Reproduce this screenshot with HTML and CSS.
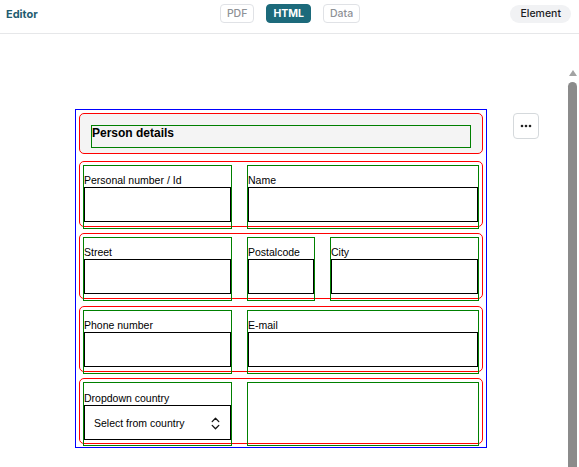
FILE: index.html
```html
<!DOCTYPE html>
<html lang="en">
<head>
<meta charset="utf-8">
<title>Editor</title>
<link rel="stylesheet" href="styles.css">
</head>
<body>
<header class="topbar">
  <div class="brand">Editor</div>
  <nav class="tabs">
    <button class="tab">PDF</button>
    <button class="tab tab-active">HTML</button>
    <button class="tab">Data</button>
  </nav>
  <div class="topbar-end"><span class="pill">Element</span></div>
</header>

<main class="canvas">
  <div class="workspace">
    <form class="frame">
      <section class="block block-title">
        <h2 class="title">Person details</h2>
      </section>

      <section class="block row-2">
        <div class="field"><label class="label">Personal number / Id</label><input class="input" type="text"></div>
        <div class="field"><label class="label">Name</label><input class="input" type="text"></div>
      </section>

      <section class="block row-3">
        <div class="field"><label class="label">Street</label><input class="input" type="text"></div>
        <div class="field"><label class="label">Postalcode</label><input class="input" type="text"></div>
        <div class="field"><label class="label">City</label><input class="input" type="text"></div>
      </section>

      <section class="block row-2">
        <div class="field"><label class="label">Phone number</label><input class="input" type="text"></div>
        <div class="field"><label class="label">E-mail</label><input class="input" type="text"></div>
      </section>

      <section class="block row-2">
        <div class="field">
          <label class="label label-select">Dropdown country</label>
          <div class="select">
            <span>Select from country</span>
            <svg class="chevrons" width="9" height="13" viewBox="0 0 9 13" aria-hidden="true">
              <path d="M1.2 4.6 L4.5 1.3 L7.8 4.6 M1.2 8.4 L4.5 11.7 L7.8 8.4" fill="none" stroke="#111" stroke-width="1.3" stroke-linecap="round" stroke-linejoin="round"/>
            </svg>
          </div>
        </div>
        <div class="field"></div>
      </section>
    </form>

    <button class="more" type="button" aria-label="More">
      <svg width="12" height="4" viewBox="0 0 12 4" aria-hidden="true">
        <circle cx="2" cy="2" r="1.3" fill="#222"/>
        <circle cx="6" cy="2" r="1.3" fill="#222"/>
        <circle cx="10" cy="2" r="1.3" fill="#222"/>
      </svg>
    </button>
  </div>

  <div class="scrollbar">
    <div class="scroll-arrow"></div>
    <div class="scroll-thumb"></div>
  </div>
</main>
</body>
</html>
```

FILE: styles.css
```css
* { box-sizing: border-box; }

html, body {
  margin: 0;
  height: 100%;
  background: #fff;
  overflow: hidden;
}

body {
  font-family: Inter, "Liberation Sans", sans-serif;
  color: #222;
}

/* top bar */
.topbar {
  display: grid;
  grid-template-columns: 1fr auto 1fr;
  align-items: center;
  height: 34px;
  padding: 0 8px 6px 6px;
  border-bottom: 1px solid #e6e7e9;
}

.brand {
  font-size: 11px;
  font-weight: 700;
  color: #1f5c70;
}

.tabs {
  display: flex;
  gap: 12px;
  margin-left: 3px;
}

.tab {
  height: 19px;
  padding: 0 6px;
  border: 1px solid #e0e2e6;
  border-radius: 4px;
  background: #fff;
  font-family: Inter, "Liberation Sans", sans-serif;
  font-size: 10.5px;
  font-weight: 500;
  color: #8e9196;
  line-height: 17px;
}

.tab-active {
  background: #1c6a7b;
  border-color: #1c6a7b;
  color: #fff;
  font-weight: 700;
  padding: 0 6px;
}

.topbar-end {
  display: flex;
  justify-content: flex-end;
}

.pill {
  height: 18px;
  padding: 0 10px;
  border-radius: 9px;
  background: #f1f2f4;
  font-size: 10.5px;
  font-weight: 500;
  line-height: 18px;
  color: #1d1d1f;
}

/* canvas */
.canvas {
  position: relative;
  height: calc(100% - 34px);
  padding: 75px 0 0 75px;
}

.workspace {
  display: flex;
  align-items: flex-start;
  gap: 26px;
}

.frame {
  width: 412px;
  margin: 0;
  padding: 3px;
  border: 1px solid #0000ff;
  display: flex;
  flex-direction: column;
  gap: 6.5px;
  font-family: "Liberation Sans", Arial, sans-serif;
}

.block {
  height: 66px;
  padding: 3px;
  border: 1px solid #ff0000;
  border-radius: 5px;
  display: grid;
  gap: 15px;
  align-items: start;
}

.row-2 { grid-template-columns: 149px 232px; }
.row-3 { grid-template-columns: 149px 68px 149px; }

.block-title {
  height: 41px;
  padding: 11px 11px 0;
  background: #f4f4f4;
  display: block;
}

.title {
  margin: 0;
  height: 23px;
  border: 1px solid #008000;
  font-size: 12px;
  font-weight: 700;
  line-height: 15px;
  color: #000;
}

.field {
  height: 64px;
  border: 1px solid #008000;
  display: flex;
  flex-direction: column;
}

.label {
  margin-top: 7px;
  font-size: 10.5px;
  line-height: 14px;
  color: #000;
}

.label-select { margin-top: 8px; }

.input {
  width: 100%;
  height: 35px;
  margin: 0;
  border: 1px solid #000;
  border-radius: 0;
  background: #fff;
  font: inherit;
}

.select {
  height: 35px;
  border: 1px solid #000;
  display: flex;
  align-items: center;
  justify-content: space-between;
  padding: 1px 10px 0 9px;
  font-size: 10.5px;
  color: #000;
}

.chevrons { display: block; }

/* floating element menu */
.more {
  margin-top: 4px;
  width: 26px;
  height: 26px;
  padding: 0;
  border: 1px solid #d5d9dc;
  border-radius: 4px;
  background: #fff;
  display: flex;
  align-items: center;
  justify-content: center;
}

/* scrollbar */
.scrollbar {
  position: absolute;
  top: 0;
  right: 2px;
  bottom: 0;
  width: 9px;
  display: flex;
  flex-direction: column;
}

.scroll-arrow {
  margin: 36px auto 0;
  width: 0;
  height: 0;
  border-left: 4.5px solid transparent;
  border-right: 4.5px solid transparent;
  border-bottom: 6px solid #a3a3a3;
}

.scroll-thumb {
  flex: 1;
  margin-top: 6px;
  border-radius: 4.5px 4.5px 0 0;
  background: #8b8b8b;
}
```
